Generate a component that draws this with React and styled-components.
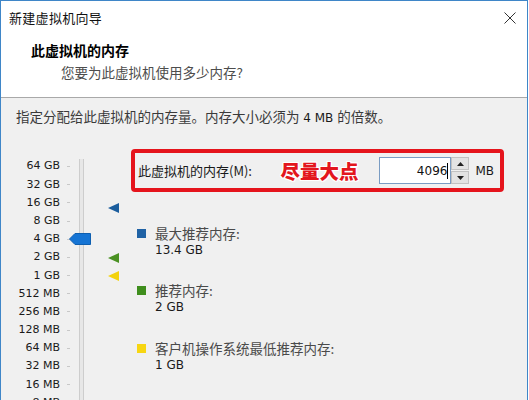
import React from 'react';
import styled, { createGlobalStyle } from 'styled-components';

const GlobalStyle = createGlobalStyle`
  html, body { margin: 0; padding: 0; background: #ffffff; }
  body { font-family: "DejaVu Sans", "Noto Sans CJK SC", sans-serif; }
`;

const CJK = `"Noto Sans CJK SC", "DejaVu Sans", sans-serif`;
const LATIN = `"DejaVu Sans", "Noto Sans CJK SC", sans-serif`;

const ROW = 18.2;
const FIRST_CENTER = 17.5;

const Window = styled.div`
  width: 528px;
  height: 400px;
  box-sizing: border-box;
  border: 1px solid #3f86c8;
  border-bottom: none;
  overflow: hidden;
  display: flex;
  flex-direction: column;
  background: #f0f0f0;
`;

const TitleBar = styled.div`
  flex: none;
  height: 33px;
  display: flex;
  align-items: center;
  justify-content: space-between;
  padding: 0 11px 0 8px;
  background: #ffffff;
`;

const TitleText = styled.span`
  font-family: ${CJK};
  font-size: 13px;
  letter-spacing: 0.3px;
  color: #111;
`;

const CloseButton = styled.svg`
  width: 12px;
  height: 12px;
  display: block;
`;

const Header = styled.div`
  flex: none;
  height: 64px;
  box-sizing: border-box;
  padding: 6px 0 0 30px;
  background: #ffffff;
  border-bottom: 1px solid #a9a9a9;
`;

const HeaderTitle = styled.div`
  font-family: ${CJK};
  font-weight: 700;
  font-size: 14px;
  line-height: 20px;
  color: #000;
`;

const HeaderSub = styled.div`
  font-family: ${CJK};
  font-size: 13.5px;
  line-height: 20px;
  margin: 2px 0 0 30px;
  color: #4d4d4d;
`;

const Body = styled.div`
  flex: 1;
  padding: 9px 0 0 15px;
`;

const Description = styled.div`
  font-family: ${CJK};
  font-size: 13.5px;
  line-height: 18px;
  color: #3a3a3a;
  white-space: nowrap;
`;

const Latin = styled.span`
  font-family: ${LATIN};
  font-size: 12px;
  color: #1a1a1a;
`;

const Main = styled.div`
  display: flex;
  margin-top: 22px;
`;

const SliderArea = styled.div`
  position: relative;
  width: 115px;
  flex: none;
  display: flex;
`;

const Labels = styled.div`
  width: 44px;
  padding-top: 8.4px;
  display: flex;
  flex-direction: column;
  align-items: flex-end;
`;

const ScaleLabel = styled.div`
  height: ${ROW}px;
  line-height: ${ROW}px;
  font-family: ${LATIN};
  font-size: 11px;
  color: #1a1a1a;
  white-space: nowrap;
`;

const Ticks = styled.div`
  width: 3px;
  margin-left: 7px;
  padding-top: 8.4px;
  display: flex;
  flex-direction: column;
`;

const Tick = styled.div`
  height: ${ROW}px;
  display: flex;
  align-items: center;
  &::after {
    content: "";
    width: 3px;
    height: 1px;
    background: #c8c8c8;
  }
`;

const Track = styled.div`
  width: 5px;
  box-sizing: border-box;
  margin: 10px 0 0 9px;
  height: 400px;
  background: #e7e7e7;
  border-left: 1px solid #cdcdcd;
  border-right: 1px solid #cdcdcd;
`;

const Thumb = styled.svg`
  position: absolute;
  left: 53px;
  width: 22px;
  height: 12px;
`;

const Marker = styled.svg`
  position: absolute;
  left: 92px;
  width: 11px;
  height: 10px;
`;

const RightColumn = styled.div`
  display: flex;
  flex-direction: column;
`;

const HighlightBox = styled.div`
  width: 373px;
  height: 43px;
  box-sizing: border-box;
  border: 4px solid #e5141c;
  border-radius: 4px;
  display: flex;
  align-items: center;
  padding: 0 6px 0 3px;
`;

const FieldLabel = styled.span`
  font-family: ${CJK};
  font-size: 13px;
  color: #1a1a1a;
  white-space: nowrap;
`;

const Hint = styled.span`
  margin-left: auto;
  margin-right: 21px;
  font-family: ${CJK};
  font-weight: 900;
  font-size: 19.5px;
  line-height: 24px;
  color: #e3161d;
  text-shadow: 1px 0 0 #fff, -1px 0 0 #fff, 0 1px 0 #fff, 0 -1px 0 #fff,
    1px 1px 0 #fff, -1px -1px 0 #fff, 1px -1px 0 #fff, -1px 1px 0 #fff;
  white-space: nowrap;
`;

const NumberField = styled.div`
  display: flex;
  height: 27px;
`;

const NumberInput = styled.div`
  width: 72px;
  box-sizing: border-box;
  background: #ffffff;
  border: 1px solid #7a9cc3;
  display: flex;
  align-items: center;
  justify-content: flex-end;
  padding-right: 2px;
  font-family: ${LATIN};
  font-size: 12px;
  color: #111;
`;

const Caret = styled.span`
  width: 1px;
  height: 16px;
  background: #000;
  margin-left: 0;
`;

const Spinner = styled.div`
  width: 18px;
  display: flex;
  flex-direction: column;
  gap: 1px;
`;

const SpinButton = styled.div`
  flex: 1;
  background: #e3e3e3;
  border: 1px solid #c2c2c2;
  display: flex;
  align-items: center;
  justify-content: center;
  svg { width: 7px; height: 4px; display: block; }
`;

const Unit = styled.span`
  margin-left: 6px;
  font-family: ${LATIN};
  font-size: 12px;
  color: #1a1a1a;
`;

const Legend = styled.div`
  margin-top: 32.5px;
  padding-left: 6px;
  display: flex;
  flex-direction: column;
  gap: 23.5px;
`;

const LegendItem = styled.div`
  display: flex;
  align-items: flex-start;
`;

const Swatch = styled.div`
  width: 9px;
  height: 9px;
  margin-top: 4px;
  background: ${(p) => p.$color};
  flex: none;
`;

const LegendText = styled.div`
  margin-left: 9px;
  display: flex;
  flex-direction: column;
`;

const LegendLabel = styled.div`
  font-family: ${CJK};
  font-size: 13.5px;
  line-height: 17px;
  color: #4a4a4a;
  white-space: nowrap;
`;

const LegendValue = styled.div`
  font-family: ${LATIN};
  font-size: 12px;
  line-height: 17px;
  color: #1a1a1a;
`;

const scale = [
  '64 GB', '32 GB', '16 GB', '8 GB', '4 GB', '2 GB', '1 GB',
  '512 MB', '256 MB', '128 MB', '64 MB', '32 MB', '16 MB', '8 MB', '4 MB',
];

const centerFor = (gb) => FIRST_CENTER + (6 - Math.log2(gb)) * ROW;

const markers = [
  { gb: 13.4, color: '#1b5d9d' },
  { gb: 2, color: '#4a9123' },
  { gb: 1, color: '#f3d20c' },
];

const legend = [
  { color: '#1f62a5', label: '最大推荐内存:', value: '13.4 GB' },
  { color: '#3f8e1d', label: '推荐内存:', value: '2 GB' },
  { color: '#f7d612', label: '客户机操作系统最低推荐内存:', value: '1 GB' },
];

export default function App() {
  return (
    <>
      <GlobalStyle />
      <Window>
        <TitleBar>
          <TitleText>新建虚拟机向导</TitleText>
          <CloseButton viewBox="0 0 12 12">
            <path d="M0.5 0.5 L11.5 11.5 M11.5 0.5 L0.5 11.5" stroke="#333" strokeWidth="1" fill="none" />
          </CloseButton>
        </TitleBar>
        <Header>
          <HeaderTitle>此虚拟机的内存</HeaderTitle>
          <HeaderSub>您要为此虚拟机使用多少内存?</HeaderSub>
        </Header>
        <Body>
          <Description>
            指定分配给此虚拟机的内存量。内存大小必须为<Latin> 4 MB </Latin>的倍数。
          </Description>
          <Main>
            <SliderArea>
              <Labels>
                {scale.map((s) => (
                  <ScaleLabel key={s}>{s}</ScaleLabel>
                ))}
              </Labels>
              <Ticks>
                {scale.map((s) => (
                  <Tick key={s} />
                ))}
              </Ticks>
              <Track />
              <Thumb viewBox="0 0 22 12" style={{ top: centerFor(4) - 6 }}>
                <polygon points="0.5,6 6,0.5 21.5,0.5 21.5,11.5 6,11.5" fill="#1574d4" stroke="#0e5fb0" strokeWidth="1" />
              </Thumb>
              {markers.map((m) => (
                <Marker key={m.gb} viewBox="0 0 11 10" style={{ top: centerFor(m.gb) - 5 }}>
                  <polygon points="0,5 11,0 11,10" fill={m.color} />
                </Marker>
              ))}
            </SliderArea>
            <RightColumn>
              <HighlightBox>
                <FieldLabel>此虚拟机的内存(M):</FieldLabel>
                <Hint>尽量大点</Hint>
                <NumberField>
                  <NumberInput>
                    4096<Caret />
                  </NumberInput>
                  <Spinner>
                    <SpinButton>
                      <svg viewBox="0 0 7 4"><polygon points="0,4 3.5,0 7,4" fill="#222" /></svg>
                    </SpinButton>
                    <SpinButton>
                      <svg viewBox="0 0 7 4"><polygon points="0,0 7,0 3.5,4" fill="#222" /></svg>
                    </SpinButton>
                  </Spinner>
                </NumberField>
                <Unit>MB</Unit>
              </HighlightBox>
              <Legend>
                {legend.map((l) => (
                  <LegendItem key={l.label}>
                    <Swatch $color={l.color} />
                    <LegendText>
                      <LegendLabel>{l.label}</LegendLabel>
                      <LegendValue>{l.value}</LegendValue>
                    </LegendText>
                  </LegendItem>
                ))}
              </Legend>
            </RightColumn>
          </Main>
        </Body>
      </Window>
    </>
  );
}
